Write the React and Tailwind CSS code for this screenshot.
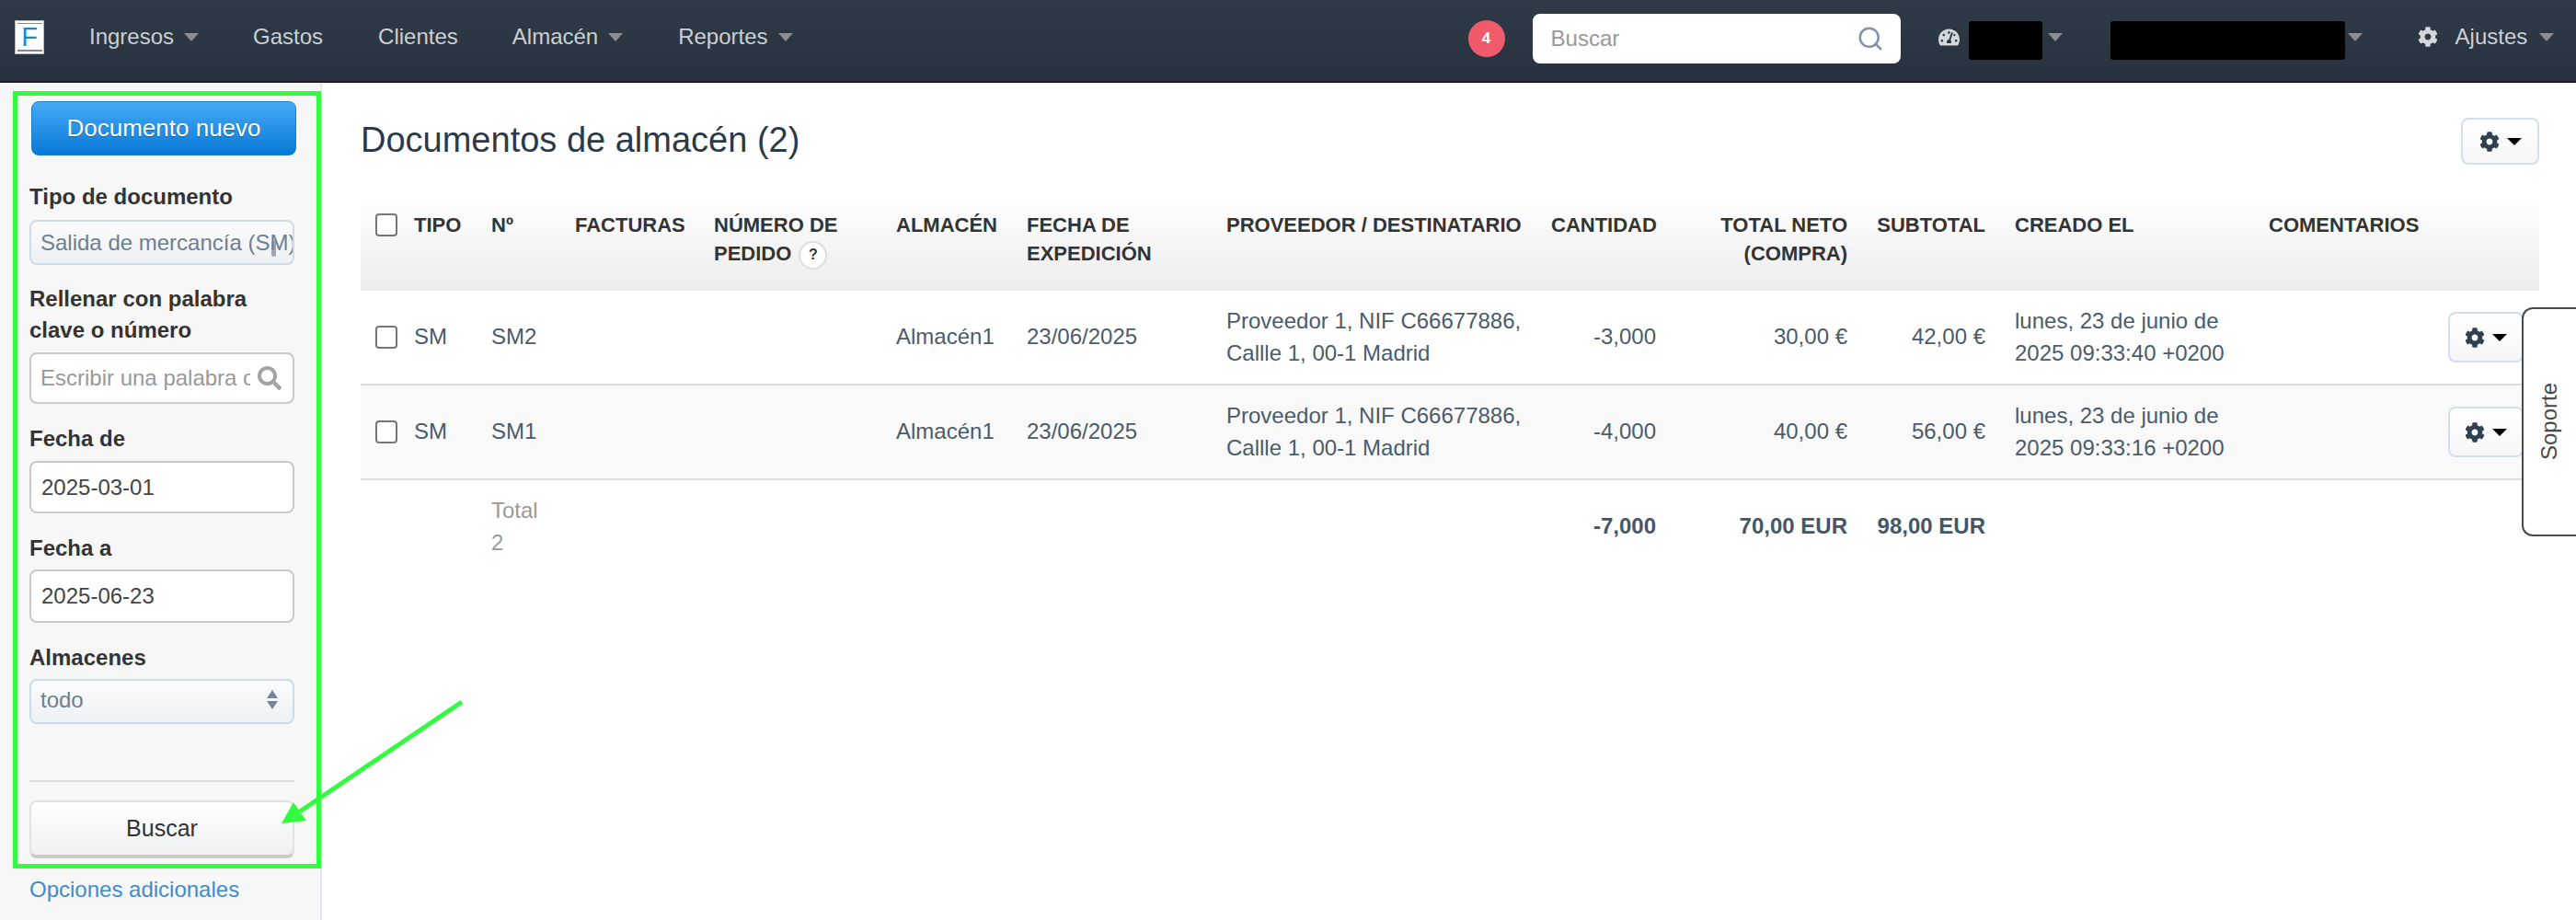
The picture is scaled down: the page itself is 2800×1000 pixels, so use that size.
import React from 'react';
import { Search } from 'lucide-react';
import { FaCog, FaSearch, FaTachometerAlt } from 'react-icons/fa';

const NavCaret = () => (
    <span className="inline-block h-0 w-0 border-x-[8px] border-t-[9px] border-x-transparent border-t-[#8b8e91]" />
);

const BlackCaret = () => (
    <span className="inline-block h-0 w-0 border-x-[8px] border-t-[8px] border-x-transparent border-t-black" />
);

const Checkbox = () => (
    <input type="checkbox" readOnly className="block h-[25px] w-[24px] appearance-none rounded-[4px] border-2 border-[#767676] bg-white" />
);

const GearButton = ({ className }) => (
    <button className={`flex h-[55px] w-[82px] items-center justify-center gap-[8px] rounded-[8px] border-2 border-[#d3e0eb] bg-gradient-to-b from-white to-[#f6f6f6] ${className}`}>
        <FaCog className="text-[22px] text-[#2f4050]" />
        <BlackCaret />
    </button>
);

const SelectArrows = () => (
    <span className="flex flex-col gap-[3px]">
        <span className="h-0 w-0 border-x-[6px] border-b-[9px] border-x-transparent border-b-[#76859a]" />
        <span className="h-0 w-0 border-x-[6px] border-t-[9px] border-x-transparent border-t-[#76859a]" />
    </span>
);

const Label = ({ className, children }) => (
    <div className={`text-[24px] font-bold leading-[34px] text-[#333] ${className}`}>{children}</div>
);

const DateInput = ({ value, className }) => (
    <input
        readOnly
        value={value}
        className={`block w-[288px] rounded-[8px] border-2 border-[#c9c9c9] bg-white px-[11px] text-[24px] text-[#444] ${className}`}
    />
);

const columns = [42, 84, 91, 151, 198, 142, 217, 353, 146, 208, 150, 276, 198, 112];

const rows = [
    { id: 'SM2', qty: '-3,000', net: '30,00 €', sub: '42,00 €', date: 'lunes, 23 de junio de 2025 09:33:40 +0200' },
    { id: 'SM1', qty: '-4,000', net: '40,00 €', sub: '56,00 €', date: 'lunes, 23 de junio de 2025 09:33:16 +0200', striped: true },
];

const headCell = 'h-[103px] px-[16px] pt-[16px] align-top text-[22px] font-bold uppercase leading-[31px] text-[#333]';
const bodyCell = 'h-[103px] border-b-2 border-[#dedede] px-[16px] align-middle text-[24px] leading-[34.5px] text-[#4a5b6c]';
const totalCell = 'whitespace-nowrap px-[16px] pb-[2px] text-right text-[24px] font-bold text-[#44566a]';

const App = () => {
    return (
        <div className="relative flex min-h-screen flex-col bg-white font-['Liberation_Sans',Arial,sans-serif]">
            {/* Top bar */}
            <nav className="flex h-[90px] shrink-0 items-center border-b-2 border-[#191f25] bg-gradient-to-b from-[#2e3b47] to-[#28323e] pb-[8px] text-[24px] text-[#ccd0d4]">
                <div className="ml-[16px] flex h-[37px] w-[32px] flex-col items-center justify-between border border-[#bbb] bg-white py-[2px] text-[30px] leading-none text-[#1c87c9]">
                    <span className="h-[2px] w-[27px] bg-[repeating-linear-gradient(90deg,#e0606a_0,#e0606a_3px,#5b8fd0_3px,#5b8fd0_6px)]" />
                    <span className="text-[29px] leading-[28px]">F</span>
                    <span className="h-[2px] w-[27px] bg-[repeating-linear-gradient(90deg,#e0606a_0,#e0606a_3px,#5b8fd0_3px,#5b8fd0_6px)]" />
                </div>
                <span className="ml-[49px]">Ingresos</span>
                <span className="ml-[11px] flex"><NavCaret /></span>
                <span className="ml-[59px]">Gastos</span>
                <span className="ml-[60px]">Clientes</span>
                <span className="ml-[59px]">Almacén</span>
                <span className="ml-[11px] flex"><NavCaret /></span>
                <span className="ml-[60px]">Reportes</span>
                <span className="ml-[11px] flex"><NavCaret /></span>

                <div className="ml-[734px] mt-[4px] flex h-[40px] w-[40px] items-center justify-center rounded-full bg-[#f05a6a] text-[17px] font-bold text-white">4</div>
                <div className="ml-[30px] mt-[4px] flex h-[54px] w-[400px] items-center justify-between rounded-[8px] bg-white pl-[20px] pr-[18px]">
                    <span className="text-[#999]">Buscar</span>
                    <Search size={30} strokeWidth={2} className="text-[#7f93aa]" />
                </div>
                <FaTachometerAlt className="ml-[41px] text-[23px] text-[#d5d8da]" />
                <div className="ml-[10px] mt-[8px] h-[42px] w-[80px] rounded-[3px] bg-black" />
                <span className="ml-[6px] flex"><NavCaret /></span>
                <div className="ml-[52px] mt-[8px] h-[42px] w-[255px] rounded-[3px] bg-black" />
                <span className="ml-[3px] flex"><NavCaret /></span>
                <FaCog className="ml-[60px] text-[22px] text-[#d5d8da]" />
                <span className="ml-[19px]">Ajustes</span>
                <span className="ml-[13px] flex"><NavCaret /></span>
            </nav>

            <div className="flex flex-1">
                {/* Filter sidebar */}
                <aside className="w-[350px] shrink-0 border-r-2 border-[#e4e8ee] bg-[#f7f7f7] pl-[14px] pt-[9px]">
                    <div className="w-[335px] border-[5px] border-[#33fb3f] pb-[6px] pl-[13px] pt-[6px]">
                        <button className="ml-[2px] flex h-[59px] w-[288px] items-center justify-center rounded-[8px] border border-[#1a7fc8] bg-gradient-to-b from-[#42aaf6] to-[#0079d6] text-[26px] text-white [text-shadow:0_1px_1px_rgba(0,0,0,0.3)]">
                            Documento nuevo
                        </button>

                        <Label className="mt-[28px]">Tipo de documento</Label>
                        <div className="relative mt-[8px] flex h-[49px] w-[288px] items-center overflow-hidden whitespace-nowrap rounded-[8px] border-2 border-[#cbdbe9] bg-gradient-to-b from-[#fafbfc] to-[#eef1f4] pl-[10px] text-[24px] text-[#6d7f90]">
                            Salida de mercancía (SM)
                            <span className="absolute left-[261px] top-[20px] h-[18px] w-[5px] rounded-full bg-[#76859a]/70" />
                        </div>

                        <Label className="mt-[20px] w-[288px]">Rellenar con palabra clave o número</Label>
                        <div className="mt-[7px] flex h-[56px] w-[288px] items-center rounded-[8px] border-2 border-[#c9c9c9] bg-white pl-[10px] pr-[12px]">
                            <input
                                readOnly
                                placeholder="Escribir una palabra o número"
                                className="w-[228px] bg-transparent text-[24px] outline-none placeholder:text-[#999]"
                            />
                            <FaSearch className="ml-[8px] shrink-0 text-[26px] text-[#a3a3a3]" />
                        </div>

                        <Label className="mt-[21px]">Fecha de</Label>
                        <DateInput value="2025-03-01" className="mt-[7px] h-[57px]" />

                        <Label className="mt-[21px]">Fecha a</Label>
                        <DateInput value="2025-06-23" className="mt-[6px] h-[58px]" />

                        <Label className="mt-[21px]">Almacenes</Label>
                        <div className="mt-[6px] flex h-[49px] w-[288px] items-center justify-between rounded-[8px] border-2 border-[#cbdbe9] bg-gradient-to-b from-[#fafbfc] to-[#eef1f4] pb-[4px] pl-[10px] pr-[16px] text-[24px] text-[#6d7f90]">
                            todo
                            <SelectArrows />
                        </div>

                        <div className="mt-[61px] h-[2px] w-[288px] bg-[#dcdcdc]" />

                        <button className="mt-[20px] block h-[63px] w-[288px] rounded-[8px] border-2 border-b-[4px] border-[#e2e2e2] border-b-[#cbcbcb] bg-gradient-to-b from-white to-[#eef0f2] text-[25px] text-[#333]">
                            Buscar
                        </button>
                    </div>
                    <div className="ml-[18px] mt-[6px] text-[24px] leading-[34px] text-[#3a8dcf]">Opciones adicionales</div>
                </aside>

                {/* Documents list */}
                <main className="min-w-0 flex-1 pl-[42px] pr-[38px] pt-[38px]">
                    <div className="flex h-[51px] w-[2368px] items-center justify-between">
                        <h1 className="pb-[3px] text-[38px] font-normal leading-[42px] text-[#2c3a47]">Documentos de almacén (2)</h1>
                        <GearButton className="!h-[51px] !w-[85px]" />
                    </div>

                    <table className="mt-[34px] w-[2368px] table-fixed border-separate border-spacing-0">
                        <colgroup>
                            {columns.map((width, i) => (
                                <col key={i} style={{ width }} />
                            ))}
                        </colgroup>
                        <thead>
                            <tr className="bg-gradient-to-b from-white to-[#ececec]">
                                <th className={`${headCell} !pr-0 !pt-[19px]`}><Checkbox /></th>
                                <th className={`${headCell} text-left`}>Tipo</th>
                                <th className={`${headCell} text-left`}>Nº</th>
                                <th className={`${headCell} text-left`}>Facturas</th>
                                <th className={`${headCell} text-left`}>
                                    Número de pedido{' '}
                                    <span className="ml-[2px] inline-flex h-[31px] w-[31px] items-center justify-center rounded-full border-2 border-[#dedede] bg-white align-middle text-[16px] leading-none">?</span>
                                </th>
                                <th className={`${headCell} text-left`}>Almacén</th>
                                <th className={`${headCell} text-left`}>Fecha de expedición</th>
                                <th className={`${headCell} whitespace-nowrap text-left`}>Proveedor / Destinatario</th>
                                <th className={`${headCell} text-right`}>Cantidad</th>
                                <th className={`${headCell} text-right`}>Total neto (compra)</th>
                                <th className={`${headCell} text-right`}>Subtotal</th>
                                <th className={`${headCell} text-left`}>Creado el</th>
                                <th className={`${headCell} text-left`}>Comentarios</th>
                                <th className={headCell} />
                            </tr>
                        </thead>
                        <tbody>
                            {rows.map(row => (
                                <tr key={row.id} className={row.striped ? 'bg-[#f9f9f9]' : ''}>
                                    <td className={`${bodyCell} !pr-0`}><Checkbox /></td>
                                    <td className={bodyCell}>SM</td>
                                    <td className={bodyCell}>{row.id}</td>
                                    <td className={bodyCell} />
                                    <td className={bodyCell} />
                                    <td className={bodyCell}>Almacén1</td>
                                    <td className={bodyCell}>23/06/2025</td>
                                    <td className={bodyCell}>Proveedor 1, NIF C66677886, Callle 1, 00-1 Madrid</td>
                                    <td className={`${bodyCell} text-right`}>{row.qty}</td>
                                    <td className={`${bodyCell} text-right`}>{row.net}</td>
                                    <td className={`${bodyCell} text-right`}>{row.sub}</td>
                                    <td className={bodyCell}>{row.date}</td>
                                    <td className={bodyCell} />
                                    <td className={`${bodyCell} !px-0`}><GearButton className="ml-[13px]" /></td>
                                </tr>
                            ))}
                            <tr>
                                <td colSpan={2} />
                                <td className="px-[16px] py-[16px] text-[24px] leading-[34.5px] text-[#999]">Total 2</td>
                                <td colSpan={5} />
                                <td className={totalCell}>-7,000</td>
                                <td className={totalCell}>70,00 EUR</td>
                                <td className={totalCell}>98,00 EUR</td>
                                <td colSpan={3} />
                            </tr>
                        </tbody>
                    </table>
                </main>
            </div>

            {/* Support tab */}
            <div className="absolute right-0 top-[334px] flex h-[249px] w-[59px] items-center justify-center rounded-l-[12px] border-2 border-r-0 border-[#4a4a4a] bg-white">
                <span className="mb-[2px] -rotate-90 whitespace-nowrap text-[24px] text-[#4a4a4a]">Soporte</span>
            </div>

            {/* Annotation arrow */}
            <svg className="pointer-events-none absolute left-0 top-0" width="520" height="920" viewBox="0 0 520 920">
                <line x1="502" y1="763" x2="326" y2="882" stroke="#33fb3f" strokeWidth="5" />
                <polygon points="306,895 319,872 333,892" fill="#33fb3f" />
            </svg>
        </div>
    );
};

export default App;
